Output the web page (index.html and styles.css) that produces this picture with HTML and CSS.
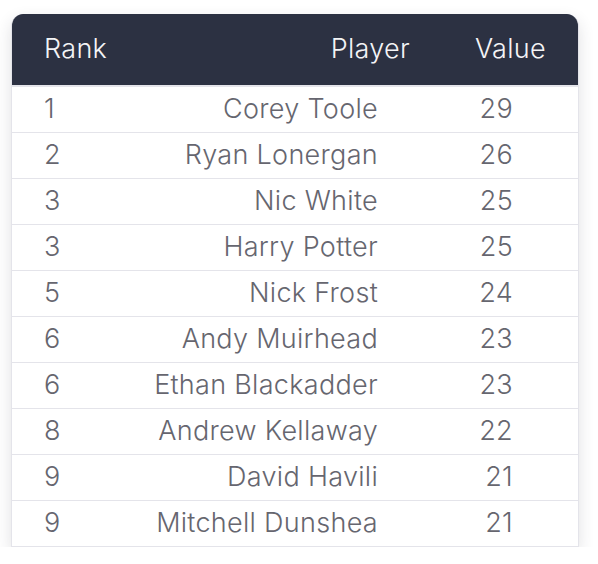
FILE: index.html
```html
<!DOCTYPE html>
<html>
<head>
<meta charset="utf-8">
<link rel="stylesheet" href="styles.css">
</head>
<body>
<div class="card">
  <table class="board">
    <thead>
      <tr><th class="c-rank">Rank</th><th class="c-player">Player</th><th class="c-value">Value</th></tr>
    </thead>
    <tbody>
      <tr><td class="c-rank">1</td><td class="c-player">Corey Toole</td><td class="c-value">29</td></tr>
      <tr><td class="c-rank">2</td><td class="c-player">Ryan Lonergan</td><td class="c-value">26</td></tr>
      <tr><td class="c-rank">3</td><td class="c-player">Nic White</td><td class="c-value">25</td></tr>
      <tr><td class="c-rank">3</td><td class="c-player">Harry Potter</td><td class="c-value">25</td></tr>
      <tr><td class="c-rank">5</td><td class="c-player">Nick Frost</td><td class="c-value">24</td></tr>
      <tr><td class="c-rank">6</td><td class="c-player">Andy Muirhead</td><td class="c-value">23</td></tr>
      <tr><td class="c-rank">6</td><td class="c-player">Ethan Blackadder</td><td class="c-value">23</td></tr>
      <tr><td class="c-rank">8</td><td class="c-player">Andrew Kellaway</td><td class="c-value">22</td></tr>
      <tr><td class="c-rank">9</td><td class="c-player">David Havili</td><td class="c-value">21</td></tr>
      <tr><td class="c-rank">9</td><td class="c-player">Mitchell Dunshea</td><td class="c-value">21</td></tr>
    </tbody>
  </table>
</div>
</body>
</html>
```
FILE: styles.css
```css
html, body {
  margin: 0;
  padding: 0;
  background: #ffffff;
}
body {
  padding: 14px 19px 0 11px;
  font-family: Inter, "Liberation Sans", sans-serif;
}
.card {
  width: 568px;
  border-radius: 12px 12px 0 0;
  overflow: hidden;
  box-shadow: 0 6px 16px rgba(40, 40, 60, 0.14);
  border-left: 1px solid #e4e4ea;
  border-right: 1px solid #e4e4ea;
  border-bottom: 1px solid #e4e4ea;
  box-sizing: border-box;
}
.board {
  width: 100%;
  border-collapse: collapse;
  table-layout: fixed;
}
.board th,
.board td {
  white-space: nowrap;
  font-weight: 300;
  font-size: 27px;
  letter-spacing: 0.3px;
}
.board th {
  background: #2c3142;
  color: #f4f4f6;
  height: 72px;
  padding: 0 32px 3px;
  box-sizing: border-box;
}
.board td {
  color: #66666f;
  height: 46px;
  padding: 0 32px 1px;
  border-top: 1px solid #e4e4ea;
  box-sizing: border-box;
}
.board tbody tr:first-child td { border-top: 2px solid #e4e4ea; }
.c-rank { width: 100px; text-align: left; }
th.c-player { text-align: right; }
td.c-player { text-align: right; padding-left: 0; padding-right: 64px; }
.c-value { width: 136px; text-align: right; }
td.c-value { padding-right: 65px; }
```
